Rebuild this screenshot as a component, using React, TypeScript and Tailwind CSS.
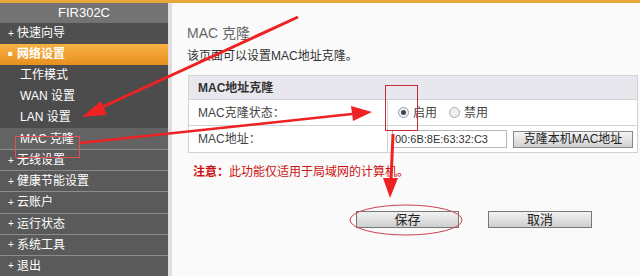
import React from "react";

const font = { fontFamily: '"Liberation Sans", "Noto Sans CJK SC", sans-serif' };

function SideItem({ label, sub, active, top }: { label: string; sub?: boolean; active?: boolean; top?: boolean }) {
  if (sub) {
    return <div className={`h-[22.3px] flex items-center pl-5 text-[12px] text-white ${active ? "bg-[#636363]" : "bg-[#4c4c4c]"}`}>
        {label}
      </div>;
  }
  return <div className={`h-[22.3px] flex items-center pl-[8px] text-[12px] text-white ${top ? "bg-[#4f4f4f]" : "bg-[#5a5a5a] border-t border-[#8c8c8c]"}`}>
      <span className="w-[9px] text-[10px]">+</span>
      {label}
    </div>;
}

export default function App() {
  return <div className="relative w-[640px] h-[276px] overflow-hidden bg-[#fafafa]" style={font}>
      <div className="h-[3px] bg-[#e9a53c]" />
      <div className="flex h-[273px]">
        <nav className="w-[168px] bg-[#5a5a5a] flex flex-col">
          <div className="h-[20px] bg-[#737373] flex items-center justify-center text-[13px] text-white">FIR302C</div>
          <SideItem label="快速向导" top />
          <div className="h-[22.3px] flex items-center pl-[8px] text-[12px] font-bold text-white bg-gradient-to-b from-[#f6b243] to-[#e8901c]">
            <span className="w-[9px] text-[8px]">■</span>
            网络设置
          </div>
          <SideItem label="工作模式" sub />
          <SideItem label="WAN 设置" sub />
          <SideItem label="LAN 设置" sub />
          <SideItem label="MAC 克隆" sub active />
          <SideItem label="无线设置" />
          <SideItem label="健康节能设置" />
          <SideItem label="云账户" />
          <SideItem label="运行状态" />
          <SideItem label="系统工具" />
          <SideItem label="退出" />
        </nav>
        <div className="w-[4px] bg-[#dedede]" />
        <main className="flex-1 pl-[15px] pr-[2px]">
          <h1 className="mt-[21px] text-[14px] leading-[18px] text-[#666]">MAC 克隆</h1>
          <p className="mt-[5px] text-[12px] leading-[18px] text-[#333]">该页面可以设置MAC地址克隆。</p>
          <div className="mt-[10px] ml-px border border-[#d2d2d2] w-[450px] text-[12px] text-[#444]">
            <div className="h-[24px] bg-[#e7e7ed] flex items-center pl-[9px] font-bold text-[#333] border-b border-[#d2d2d2]">MAC地址克隆</div>
            <div className="flex h-[26px] border-b border-[#d2d2d2] bg-white">
              <div className="w-[199px] flex items-center pl-[9px] border-r border-[#d2d2d2]">MAC克隆状态：</div>
              <div className="flex items-center pl-[10px] gap-[4px]">
                <span className="w-[11px] h-[11px] rounded-full border border-[#8aa0c0] bg-[#f0f0f0] flex items-center justify-center">
                  <span className="w-[5px] h-[5px] rounded-full bg-[#444]" />
                </span>
                <span>启用</span>
                <span className="ml-[8px] w-[11px] h-[11px] rounded-full border border-[#aaa] bg-[#eee]" />
                <span>禁用</span>
              </div>
            </div>
            <div className="flex h-[26px] bg-white">
              <div className="w-[199px] flex items-center pl-[9px] border-r border-[#d2d2d2]">MAC地址：</div>
              <div className="flex items-center pl-[4px] gap-[6px]">
                <div className="w-[115px] h-[18px] border border-[#b8b8b8] bg-white flex items-center pl-[2px] text-[11px] text-[#333]">00:6B:8E:63:32:C3</div>
                <button className="w-[120px] h-[17px] border border-[#888] bg-gradient-to-b from-[#f4f4f4] to-[#d2d2d2] text-[12px] leading-[15px] text-[#222]">克隆本机MAC地址</button>
              </div>
            </div>
          </div>
          <p className="mt-[10px] ml-[6px] text-[12px] text-[#cc1111]"><b>注意：</b>此功能仅适用于局域网的计算机。</p>
          <div className="mt-[30px] flex pl-[169px] gap-[29px]">
            <button className="w-[103px] h-[17px] border border-[#777] bg-gradient-to-b from-[#f2f2f2] to-[#cfcfcf] text-[13px] leading-[15px] text-[#222]">保存</button>
            <button className="w-[104px] h-[17px] border border-[#777] bg-gradient-to-b from-[#f2f2f2] to-[#cfcfcf] text-[13px] leading-[15px] text-[#222]">取消</button>
          </div>
        </main>
      </div>
      <svg className="absolute inset-0 pointer-events-none" width="640" height="276">
        <rect x="15.5" y="136.5" width="64" height="21" fill="none" stroke="#e0505a" strokeWidth="1" />
        <rect x="385.5" y="85.5" width="32" height="45" fill="none" stroke="#c8283a" strokeWidth="1" />
        <ellipse cx="406" cy="220" rx="56" ry="15" fill="none" stroke="#d04050" strokeWidth="1" />
        <g fill="#ee2222" stroke="#ee2222">
          <line x1="298" y1="17" x2="98" y2="109" strokeWidth="3" />
          <polygon points="82,117 101,101 107,115" stroke="none" />
          <line x1="80" y1="143" x2="352" y2="114" strokeWidth="2.5" />
          <polygon points="372,112 351,106 353,121" stroke="none" />
          <line x1="393" y1="134" x2="391" y2="180" strokeWidth="3" />
          <polygon points="390,198 383,178 398,178" stroke="none" />
        </g>
      </svg>
    </div>;
}
